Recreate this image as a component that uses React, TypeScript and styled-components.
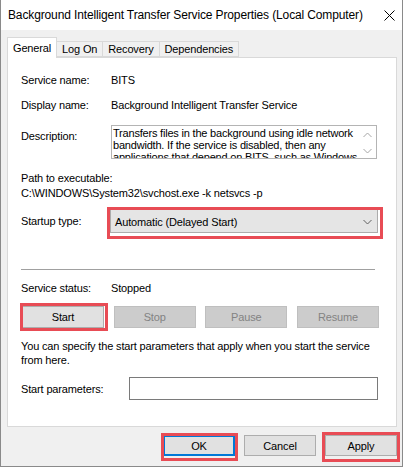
import styled, { createGlobalStyle, css } from "styled-components";

const GlobalStyle = createGlobalStyle`
  html, body {
    margin: 0;
    padding: 0;
    background: #ffffff;
  }
  body {
    font-family: "Liberation Sans", Arial, sans-serif;
    font-size: 11px;
    letter-spacing: -0.15px;
    color: #000000;
  }
`;

type Mark = { $mark?: [number, number, number, number] };

// red annotation frame drawn over a control: insets top, right, bottom, left
const marked = css<Mark>`
  position: relative;
  ${({ $mark }) =>
    $mark &&
    css`
      &::after {
        content: "";
        position: absolute;
        top: ${$mark[0]}px;
        right: ${$mark[1]}px;
        bottom: ${$mark[2]}px;
        left: ${$mark[3]}px;
        border: 3px solid #e84c55;
        pointer-events: none;
      }
    `}
`;

const tabs = ["General", "Log On", "Recovery", "Dependencies"];

const description = [
  "Transfers files in the background using idle network",
  "bandwidth. If the service is disabled, then any",
  "applications that depend on BITS, such as Windows",
  "Update or MSN Explorer, will be unable to",
];

const Chevron: React.FC<{ up?: boolean; color: string }> = ({ up, color }) => (
  <svg width="9" height="6" viewBox="0 0 9 6">
    <path
      d={up ? "M0.5 5 L4.5 1 L8.5 5" : "M0.5 1 L4.5 5 L8.5 1"}
      fill="none"
      stroke={color}
      strokeWidth="1"
    />
  </svg>
);

const App: React.FC = () => {
  return (
    <>
      <GlobalStyle />
      <Window>
        <TitleBar>
          <Title>Background Intelligent Transfer Service Properties (Local Computer)</Title>
          <CloseIcon width="11" height="11" viewBox="0 0 11 11">
            <path d="M0.5 0.5 L10.5 10.5 M10.5 0.5 L0.5 10.5" stroke="#000" strokeWidth="1" />
          </CloseIcon>
        </TitleBar>
        <Body>
          <TabStrip>
            {tabs.map((t, i) => (
              <Tab key={t} $active={i === 0}>
                {t}
              </Tab>
            ))}
          </TabStrip>
          <Panel>
            <Row>
              <Label>Service name:</Label>
              <span>BITS</span>
            </Row>
            <Row $gap={11}>
              <Label>Display name:</Label>
              <span>Background Intelligent Transfer Service</span>
            </Row>
            <Row $gap={13} $top>
              <Label $offset={4}>Description:</Label>
              <DescBox>
                <DescText>{description.join("\n")}</DescText>
                <ScrollBar>
                  <Chevron up color="#a6a6a6" />
                  <Chevron color="#a6a6a6" />
                </ScrollBar>
              </DescBox>
            </Row>
            <Line $gap={12}>Path to executable:</Line>
            <Line $gap={1}>C:\WINDOWS\System32\svchost.exe -k netsvcs -p</Line>
            <Row $gap={9}>
              <Label>Startup type:</Label>
              <Combo $mark={[-3, -6, -7, -4]}>
                <span>Automatic (Delayed Start)</span>
                <Chevron color="#606060" />
              </Combo>
            </Row>
            <Separator />
            <Row $gap={11}>
              <Label>Service status:</Label>
              <span>Stopped</span>
            </Row>
            <ActionRow>
              <ActionButton $mark={[-4, -5, -4, -3]}>Start</ActionButton>
              <ActionButton disabled>Stop</ActionButton>
              <ActionButton disabled>Pause</ActionButton>
              <ActionButton disabled>Resume</ActionButton>
            </ActionRow>
            <Hint>
              You can specify the start parameters that apply when you start the service from here.
            </Hint>
            <Row $gap={10}>
              <Label $width={108}>Start parameters:</Label>
              <ParamInput />
            </Row>
          </Panel>
          <DialogButtons>
            <DialogButton $default $mark={[-4, -5, -7, -4]}>
              OK
            </DialogButton>
            <DialogButton>Cancel</DialogButton>
            <DialogButton $mark={[-4, -4, -7, -4]}>Apply</DialogButton>
          </DialogButtons>
        </Body>
      </Window>
    </>
  );
};

export default App;

const Window = styled.div`
  width: 403px;
  height: 467px;
  box-sizing: border-box;
  border: 1px solid #8a8a8a;
  border-top: none;
  background: #f0f0f0;
  display: flex;
  flex-direction: column;
`;

const TitleBar = styled.div`
  height: 30px;
  background: #ffffff;
  display: flex;
  align-items: center;
  justify-content: space-between;
  padding: 0 7px 0 7px;
`;

const Title = styled.div`
  font-size: 12px;
  letter-spacing: -0.13px;
  white-space: nowrap;
`;

const CloseIcon = styled.svg`
  display: block;
`;

const Body = styled.div`
  flex: 1;
  padding: 7px 5px 0 6px;
  display: flex;
  flex-direction: column;
`;

const TabStrip = styled.div`
  display: flex;
  align-items: flex-end;
  height: 20px;
`;

const Tab = styled.div<{ $active?: boolean }>`
  box-sizing: border-box;
  height: ${({ $active }) => ($active ? "21px" : "16px")};
  margin-bottom: ${({ $active }) => ($active ? "-1px" : "0")};
  padding: 0 5px;
  display: flex;
  align-items: center;
  border: 1px solid #d9d9d9;
  border-bottom: ${({ $active }) => ($active ? "none" : "1px solid #d9d9d9")};
  background: ${({ $active }) => ($active ? "#ffffff" : "#f0f0f0")};
  position: relative;
  z-index: ${({ $active }) => ($active ? 1 : 0)};
  & + & {
    margin-left: -1px;
  }
`;

const Panel = styled.div`
  background: #ffffff;
  border: 1px solid #d9d9d9;
  padding: 15px 17px 26px 13px;
  display: flex;
  flex-direction: column;
`;

const Row = styled.div<{ $gap?: number; $top?: boolean }>`
  display: flex;
  align-items: ${({ $top }) => ($top ? "flex-start" : "center")};
  line-height: 14px;
  margin-top: ${({ $gap }) => $gap ?? 0}px;
`;

const Label = styled.span<{ $width?: number; $offset?: number }>`
  width: ${({ $width }) => $width ?? 90}px;
  flex-shrink: 0;
  margin-top: ${({ $offset }) => $offset ?? 0}px;
`;

const Line = styled.div<{ $gap?: number }>`
  line-height: 14px;
  margin-top: ${({ $gap }) => $gap ?? 0}px;
`;

const DescBox = styled.div`
  width: 266px;
  height: 34px;
  box-sizing: border-box;
  border: 1px solid #b4b4b4;
  display: flex;
  overflow: hidden;
`;

const DescText = styled.div`
  flex: 1;
  padding: 1px 0 0 1px;
  line-height: 12px;
  white-space: pre;
  letter-spacing: -0.2px;
  overflow: hidden;
`;

const ScrollBar = styled.div`
  width: 17px;
  background: #ffffff;
  display: flex;
  flex-direction: column;
  align-items: center;
  justify-content: space-between;
  padding: 6px 0 4px;
  box-sizing: border-box;
`;

const Combo = styled.div<Mark>`
  ${marked}
  width: 268px;
  height: 24px;
  box-sizing: border-box;
  margin-left: -1px;
  padding: 2px 5px 0 4px;
  background: #e5e5e5;
  border: 1px solid #acacac;
  display: flex;
  align-items: center;
  justify-content: space-between;
`;

const Separator = styled.div`
  height: 1px;
  background: #a0a0a0;
  margin: 36px 4px 0 0;
`;

const buttonBase = css`
  box-sizing: border-box;
  font-family: "Liberation Sans", Arial, sans-serif;
  font-size: 11px;
  letter-spacing: -0.15px;
  color: #000000;
  background: #e1e1e1;
  border: 1px solid #adadad;
  padding: 0;
  margin: 0;
`;

const ActionRow = styled.div`
  display: flex;
  justify-content: space-between;
  padding-left: 1px;
  margin-top: 11px;
`;

const ActionButton = styled.button<Mark>`
  ${buttonBase}
  ${marked}
  width: 82px;
  height: 22px;
  &:disabled {
    background: #cccccc;
    border-color: #bfbfbf;
    color: #838383;
  }
`;

const Hint = styled.p`
  margin: 11px 0 0;
  line-height: 14px;
`;

const ParamInput = styled.div`
  width: 249px;
  height: 23px;
  box-sizing: border-box;
  border: 1px solid #7a7a7a;
  background: #ffffff;
`;

const DialogButtons = styled.div`
  display: flex;
  justify-content: flex-end;
  gap: 9px;
  margin-top: 8px;
`;

const DialogButton = styled.button<Mark & { $default?: boolean }>`
  ${buttonBase}
  ${marked}
  width: 72px;
  height: 21px;
  ${({ $default }) =>
    $default &&
    css`
      border: 2px solid #0078d7;
    `}
`;
